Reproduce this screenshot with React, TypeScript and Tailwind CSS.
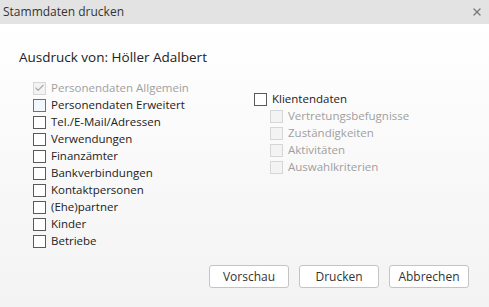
import { X, Check } from 'lucide-react';

const leftItems = [
  'Personendaten Erweitert',
  'Tel./E-Mail/Adressen',
  'Verwendungen',
  'Finanzämter',
  'Bankverbindungen',
  'Kontaktpersonen',
  '(Ehe)partner',
  'Kinder',
  'Betriebe',
];

const subItems = ['Vertretungsbefugnisse', 'Zuständigkeiten', 'Aktivitäten', 'Auswahlkriterien'];

function Box({ variant = 'normal', checked = false }: { variant?: 'normal' | 'focus' | 'disabled'; checked?: boolean }) {
  const cls =
    variant === 'focus'
      ? 'border-[#3c7fb1] bg-[#f2f7fd]'
      : variant === 'disabled'
      ? 'border-[#d6d6d6] bg-[#f3f3f3]'
      : 'border-[#5a5a5a] bg-white';
  return (
    <span className={`w-[13px] h-[13px] border flex items-center justify-center shrink-0 ${cls}`}>
      {checked && <Check className="w-[12px] h-[12px] text-[#a8a8a8]" strokeWidth={2.5} />}
    </span>
  );
}

function Row({ label, variant = 'normal', checked = false }: { label: string; variant?: 'normal' | 'focus' | 'disabled'; checked?: boolean }) {
  return (
    <div className="h-[17px] flex items-center gap-[5px]">
      <Box variant={variant} checked={checked} />
      <span className={variant === 'disabled' ? 'text-[#a0a0a0]' : 'text-[#222]'}>{label}</span>
    </div>
  );
}

export default function App() {
  return (
    <div className="w-[489px] h-[307px] flex flex-col font-['Open_Sans',sans-serif] text-[11.5px] leading-none text-[#222]">
      <div className="h-[24px] bg-[#e3e3e3] flex items-center justify-between pl-[3px] pr-[6px] text-[12px] text-[#333]">
        <span>Stammdaten drucken</span>
        <X className="w-[12px] h-[12px] text-[#777]" strokeWidth={2.5} />
      </div>
      <div className="flex-1 flex flex-col bg-gradient-to-b from-white to-[#f3f3f3]">
        <div className="pl-[19px] pt-[27px] text-[13.5px] text-[#222]">Ausdruck von: Höller Adalbert</div>
        <div className="flex pl-[33px] pt-[15px]">
          <div className="w-[221px] flex flex-col">
            <Row label="Personendaten Allgemein" variant="disabled" checked />
            {leftItems.map((l, i) => (
              <Row key={l} label={l} variant={i === 0 ? 'focus' : 'normal'} />
            ))}
          </div>
          <div className="flex flex-col mt-[11px]">
            <Row label="Klientendaten" />
            <div className="pl-[16px] flex flex-col">
              {subItems.map((s) => (
                <Row key={s} label={s} variant="disabled" />
              ))}
            </div>
          </div>
        </div>
        <div className="mt-auto flex justify-end gap-[10px] pr-[20px] pb-[19px]">
          {['Vorschau', 'Drucken', 'Abbrechen'].map((b) => (
            <button key={b} className="w-[80px] h-[23px] bg-white border border-[#c4c4c4] rounded-[3px] text-[12px] text-[#333]">
              {b}
            </button>
          ))}
        </div>
      </div>
    </div>
  );
}
